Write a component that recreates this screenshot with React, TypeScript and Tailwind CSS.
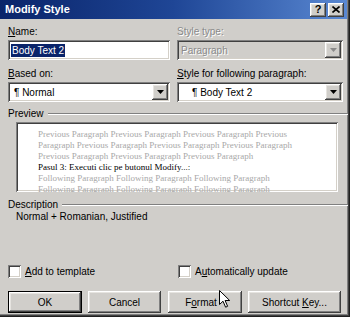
import React from "react";

// win classic bevels
const raised =
  "shadow-[inset_-1px_-1px_0_#404040,inset_1px_1px_0_#ffffff,inset_-2px_-2px_0_#808080,inset_2px_2px_0_#e6e4e0]";
const sunken =
  "shadow-[inset_1px_1px_0_#808080,inset_-1px_-1px_0_#ffffff,inset_2px_2px_0_#404040,inset_-2px_-2px_0_#d4d0c8]";

function Arrow({ disabled }: { disabled?: boolean }) {
  return (
    <svg width="7" height="4" viewBox="0 0 7 4">
      <path d="M0 0h7L3.5 4z" fill={disabled ? "#8a8a8a" : "#000"} />
    </svg>
  );
}

function Select({ text, pad, disabled }: { text: string; pad: string; disabled?: boolean }) {
  return (
    <div className={`flex h-[20px] items-center p-[2px] ${sunken} ${disabled ? "bg-[#d0ceca]" : "bg-white"}`}>
      <span
        className={`flex-1 whitespace-nowrap ${pad} ${
          disabled ? "text-[#8a8a8a] [text-shadow:1px_1px_0_#ffffff]" : "text-black"
        }`}
      >
        {text}
      </span>
      <div className={`flex h-full w-[16px] items-center justify-center bg-[#d0ceca] ${raised}`}>
        <Arrow disabled={disabled} />
      </div>
    </div>
  );
}

function Btn({ children, w, def }: { children: React.ReactNode; w: string; def?: boolean }) {
  return (
    <div className={`${w} h-[22px] ${def ? "border border-black" : ""}`}>
      <div className={`flex h-full w-full items-center justify-center bg-[#d0ceca] ${raised}`}>{children}</div>
    </div>
  );
}

function Check({ children }: { children: React.ReactNode }) {
  return (
    <div className="flex items-center gap-[4px]">
      <div className={`h-[13px] w-[13px] bg-white ${sunken}`} />
      <span>{children}</span>
    </div>
  );
}

function GroupLabel({ text }: { text: string }) {
  return (
    <div className="flex h-[12px] items-center">
      <span className="pr-[4px] leading-[12px]">{text}</span>
      <div className="mr-[-3px] flex-1 border-t border-b border-t-[#808080] border-b-white" />
    </div>
  );
}

export default function App() {
  return (
    <div className="relative h-[317px] w-[350px] overflow-hidden bg-[#d0ceca] font-['Liberation_Sans',Arial,sans-serif] text-[10px] text-black shadow-[inset_-1px_-1px_0_#202020,inset_-2px_-2px_0_#404040,inset_-3px_-3px_0_#808080]">
      {/* title bar */}
      <div className="flex h-[19px] w-[347px] items-center justify-between bg-gradient-to-r from-[#0a246a] via-[#1f4696] to-[#5a88d2] pl-[5px] pr-[3px]">
        <span className="text-[11px] font-bold text-white">Modify Style</span>
        <div className="flex gap-[2px]">
          <div className={`flex h-[14px] w-[16px] items-center justify-center bg-[#d0ceca] text-[11px] font-bold leading-none ${raised}`}>
            ?
          </div>
          <div className={`flex h-[14px] w-[16px] items-center justify-center bg-[#d0ceca] ${raised}`}>
            <svg width="8" height="7" viewBox="0 0 8 7">
              <path d="M0.5 0.5l7 6M7.5 0.5l-7 6" stroke="#000" strokeWidth="1.6" />
            </svg>
          </div>
        </div>
      </div>

      <div className="flex w-[345px] flex-col pl-[8px]">
        {/* name / style type */}
        <div className="mt-[7px] flex gap-[7px]">
          <div className="flex w-[162px] flex-col gap-[2px]">
            <div className="h-[12px] leading-[12px]">
              <u>N</u>ame:
            </div>
            <div className={`flex h-[20px] items-center bg-white pl-[3px] ${sunken}`}>
              <span className="bg-[#0a246a] px-[1px] leading-[13px] text-white">Body Text 2</span>
            </div>
          </div>
          <div className="flex w-[166px] flex-col gap-[2px]">
            <div className="h-[12px] leading-[12px] text-[#8a8a8a] [text-shadow:1px_1px_0_#ffffff]">Style type:</div>
            <Select text="Paragraph" pad="pl-[2px]" disabled />
          </div>
        </div>

        {/* based on / following */}
        <div className="mt-[8px] flex gap-[7px]">
          <div className="flex w-[162px] flex-col gap-[2px]">
            <div className="h-[12px] leading-[12px]">
              <u>B</u>ased on:
            </div>
            <Select text="¶ Normal" pad="pl-[4px]" />
          </div>
          <div className="flex w-[166px] flex-col gap-[2px]">
            <div className="h-[12px] leading-[12px]">
              <u>S</u>tyle for following paragraph:
            </div>
            <Select text="¶ Body Text 2" pad="pl-[13px]" />
          </div>
        </div>

        {/* preview */}
        <div className="mt-[6px]">
          <GroupLabel text="Preview" />
        </div>
        <div className={`ml-[8px] mt-[2px] h-[70px] w-[322px] overflow-hidden bg-white p-[2px] ${sunken}`}>
          <div className="overflow-hidden whitespace-nowrap pl-[20px] pt-[5px] font-['Liberation_Serif','Times_New_Roman',serif] text-[9px] leading-[11px] text-[#a8a8a8]">
            <div>Previous Paragraph Previous Paragraph Previous Paragraph Previous</div>
            <div>Paragraph Previous Paragraph Previous Paragraph Previous Paragraph</div>
            <div>Previous Paragraph Previous Paragraph Previous Paragraph</div>
            <div className="text-black">Pasul 3: Executi clic pe butonul Modify...:</div>
            <div>Following Paragraph Following Paragraph Following Paragraph</div>
            <div>Following Paragraph Following Paragraph Following Paragraph</div>
          </div>
        </div>

        {/* description */}
        <div className="mt-[7px]">
          <GroupLabel text="Description" />
        </div>
        <div className="h-[12px] pl-[8px] leading-[12px]">Normal + Romanian, Justified</div>

        {/* checkboxes */}
        <div className="mt-[41px] flex">
          <div className="w-[170px]">
            <Check>
              <u>A</u>dd to template
            </Check>
          </div>
          <Check>
            A<u>u</u>tomatically update
          </Check>
        </div>

        {/* buttons */}
        <div className="mt-[12px] flex">
          <Btn w="w-[74px]" def>
            OK
          </Btn>
          <div className="ml-[6px]">
            <Btn w="w-[73px]">Cancel</Btn>
          </div>
          <div className="ml-[7px]">
            <Btn w="w-[74px]">
              <span className="pr-[8px]">
                F<u>o</u>rmat
              </span>
            </Btn>
          </div>
          <div className="ml-[6px]">
            <Btn w="w-[93px]">
              <span>
                Shortcut <u>K</u>ey...
              </span>
            </Btn>
          </div>
        </div>
      </div>

      {/* mouse pointer */}
      <svg className="absolute left-[219px] top-[290px]" width="11" height="18" viewBox="0 0 11 18">
        <path d="M0.5 0.5v14l3.5-3.3 2.6 6 2-0.9-2.5-5.8h4.6z" fill="#fff" stroke="#000" strokeWidth="1" />
      </svg>
    </div>
  );
}
